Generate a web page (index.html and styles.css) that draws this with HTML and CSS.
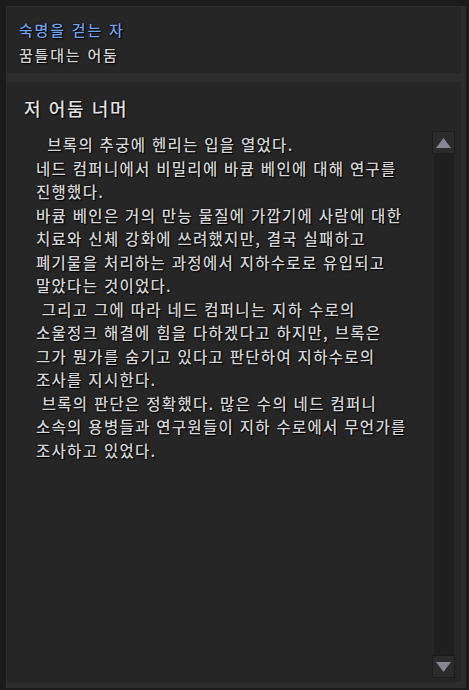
FILE: index.html
```html
<html lang="ko">
  <head>
    <title>숙명을 걷는 자</title>
    <meta charset="utf-8">
    <link rel="stylesheet" href="styles.css">
  </head>
  <body>
    <div class="frame">
      <div class="panel quest">
        <p class="quest__name">숙명을 걷는 자</p>
        <p class="quest__sub">꿈틀대는 어둠</p>
      </div>

      <div class="panel story">
        <h1 class="story__title">저 어둠 너머</h1>
        <div class="story__body">
          <div class="story__text">  브록의 추궁에 헨리는 입을 열었다.
네드 컴퍼니에서 비밀리에 바큠 베인에 대해 연구를
진행했다.
바큠 베인은 거의 만능 물질에 가깝기에 사람에 대한
치료와 신체 강화에 쓰려했지만, 결국 실패하고
폐기물을 처리하는 과정에서 지하수로로 유입되고
말았다는 것이었다.
 그리고 그에 따라 네드 컴퍼니는 지하 수로의
소울정크 해결에 힘을 다하겠다고 하지만, 브록은
그가 뭔가를 숨기고 있다고 판단하여 지하수로의
조사를 지시한다.
 브록의 판단은 정확했다. 많은 수의 네드 컴퍼니
소속의 용병들과 연구원들이 지하 수로에서 무언가를
조사하고 있었다.</div>
          <div class="scroll">
            <div class="scroll__btn">
              <svg width="15" height="10" viewBox="0 0 15 10"><polygon points="7.5,0 15,10 0,10" fill="#8a8690"/></svg>
            </div>
            <div class="scroll__track"></div>
            <div class="scroll__btn">
              <svg width="15" height="10" viewBox="0 0 15 10"><polygon points="0,0 15,0 7.5,10" fill="#8a8690"/></svg>
            </div>
          </div>
        </div>
      </div>
    </div>
  </body>
</html>
```

FILE: styles.css
```css
html, body {
  margin: 0;
  padding: 0;
}

body {
  width: 469px;
  height: 690px;
  background-color: #1b1b1b;
  font-family: "Noto Sans CJK KR", "Noto Sans", sans-serif;
  color: #d8d8d8;
  overflow: hidden;
}

.frame {
  margin: 6px 3px 2px 6px;
  padding: 1px 5px 6px 1px;
  height: 675px;
  background-color: #2d2d2d;
  display: flex;
  flex-direction: column;
  gap: 9px;
}

.panel {
  background-color: #262626;
}

p, h1 {
  margin: 0;
}

/* quest header */
.quest {
  height: 66px;
  box-sizing: border-box;
  padding: 10px 12px 0;
  font-size: 15px;
  font-weight: 500;
  letter-spacing: 1.8px;
  line-height: 25px;
  text-shadow: 0 0 2px #000, 1px 1px 1px #000;
}

.quest__name {
  color: #72a3ea;
}

.quest__sub {
  color: #d4d4d4;
}

/* story panel */
.story {
  height: 600px;
  display: flex;
  flex-direction: column;
}

.story__title {
  margin: 14px 0 11px 17px;
  font-size: 18px;
  font-weight: 500;
  letter-spacing: 1.6px;
  line-height: 24px;
  color: #e2e2e2;
  text-shadow: 0 0 2px #000, 1px 1px 1px #000;
}

.story__body {
  flex: 1;
  display: flex;
  padding: 0 6px 4px 29px;
}

.story__text {
  flex: 1;
  padding-top: 2px;
  white-space: pre;
  font-size: 15.5px;
  font-weight: 500;
  letter-spacing: 1.3px;
  line-height: 23.5px;
  color: #d6d6d6;
  text-shadow: 0 0 2px #000, 1px 1px 1px #000;
}

/* scrollbar */
.scroll {
  width: 23px;
  display: flex;
  flex-direction: column;
  align-items: center;
}

.scroll__btn {
  width: 23px;
  height: 23px;
  box-sizing: border-box;
  border: 1px solid #1c1c1c;
  background-color: #2b2b2b;
  display: flex;
  align-items: center;
  justify-content: center;
}

.scroll__track {
  flex: 1;
  width: 20px;
  background-color: #1f1f1f;
}
```
